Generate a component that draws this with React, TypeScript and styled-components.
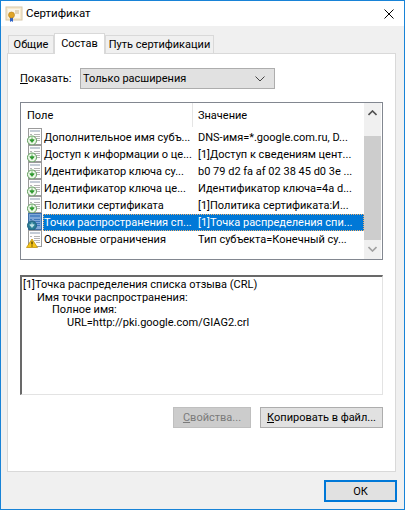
import styled, { createGlobalStyle } from 'styled-components';

const GlobalStyle = createGlobalStyle`
  html, body { margin: 0; padding: 0; background: #fff; }
  #root { width: 405px; height: 510px; }
`;

const Win = styled.div`
  box-sizing: border-box;
  width: 405px;
  height: 510px;
  border: 1px solid #1883d7;
  display: flex;
  flex-direction: column;
  font-family: Roboto, "Noto Sans", sans-serif;
  font-size: 11px;
  color: #000;
  overflow: hidden;
`;

const TitleBar = styled.div`
  height: 25px;
  flex: none;
  background: #fff;
  display: flex;
  align-items: center;
  padding: 0 10px 0 4px;
  gap: 3px;
`;

const Title = styled.div`
  flex: 1;
  font-size: 11.5px;
  line-height: 25px;
`;

const Body = styled.div`
  flex: 1;
  background: #f0f0f0;
  padding: 8px 8px 6px 6px;
  display: flex;
  flex-direction: column;
`;

const Tabs = styled.div`
  display: flex;
  align-items: flex-end;
  height: 20px;
  padding-left: 1px;
  position: relative;
  z-index: 1;
  margin-bottom: -1px;
`;

const Tab = styled.div<{ $active?: boolean; $w: number }>`
  box-sizing: border-box;
  width: ${(p) => p.$w}px;
  height: ${(p) => (p.$active ? 21 : 19)}px;
  background: ${(p) => (p.$active ? '#fff' : '#f0f0f0')};
  border: 1px solid #d9d9d9;
  border-bottom: ${(p) => (p.$active ? 'none' : '1px solid #d9d9d9')};
  text-align: center;
  line-height: ${(p) => (p.$active ? 19 : 18)}px;
  white-space: nowrap;
`;

const Panel = styled.div`
  box-sizing: border-box;
  width: 389px;
  height: 419px;
  background: #fff;
  border: 1px solid #d9d9d9;
  padding: 14px 12px 0 12px;
  display: flex;
  flex-direction: column;
`;

const ShowRow = styled.div`
  display: flex;
  align-items: center;
  height: 21px;
`;

const ShowLabel = styled.div`
  width: 60px;
  flex: none;
`;

const Combo = styled.div`
  box-sizing: border-box;
  width: 195px;
  height: 21px;
  background: #e1e1e1;
  border: 1px solid #adadad;
  padding: 0 9px 0 2px;
  display: flex;
  align-items: center;
  justify-content: space-between;
`;

const ListBox = styled.div`
  box-sizing: border-box;
  width: 363px;
  height: 158px;
  margin-top: 13px;
  border: 1px solid #828790;
  display: flex;
  background: #fff;
`;

const ListMain = styled.div`
  flex: 1;
  min-width: 0;
`;

const Header = styled.div`
  height: 24px;
  display: flex;
  align-items: center;
`;

const HeadCell = styled.div<{ $w?: number }>`
  box-sizing: border-box;
  height: 24px;
  line-height: 25px;
  padding-left: ${(p) => (p.$w ? 6 : 5)}px;
  width: ${(p) => (p.$w ? `${p.$w}px` : 'auto')};
  border-right: ${(p) => (p.$w ? '1px solid #e5e5e5' : 'none')};
`;

const Rows = styled.div`
  padding-top: 2px;
`;

const Row = styled.div`
  height: 17px;
  display: flex;
  align-items: center;
`;

const IconSlot = styled.div`
  width: 16px;
  height: 17px;
  margin-left: 6px;
  flex: none;
`;

const CellGroup = styled.div<{ $selected?: boolean }>`
  flex: 1;
  display: flex;
  height: 17px;
  line-height: 17px;
  background: ${(p) => (p.$selected ? '#0078d7' : 'transparent')};
  color: ${(p) => (p.$selected ? '#fff' : '#000')};
  outline: ${(p) => (p.$selected ? '1px dotted #f2b16e' : 'none')};
  outline-offset: -1px;
`;

const FieldCell = styled.div`
  box-sizing: border-box;
  width: 149px;
  padding-left: 1px;
  white-space: nowrap;
`;

const ValueCell = styled.div`
  flex: 1;
  padding-left: 6px;
  white-space: nowrap;
`;

const ScrollBar = styled.div`
  width: 17px;
  margin-right: 1px;
  flex: none;
  background: #f0f0f0;
  display: flex;
  flex-direction: column;
  align-items: center;
`;

const ScrollEnd = styled.div<{ $h: number }>`
  height: ${(p) => p.$h}px;
  flex: none;
  display: flex;
  align-items: center;
  justify-content: center;
`;

const Thumb = styled.div`
  width: 17px;
  height: 104px;
  margin-top: 13px;
  background: #cdcdcd;
`;

const Details = styled.div`
  box-sizing: border-box;
  width: 363px;
  height: 120px;
  margin-top: 15px;
  border: 1px solid #e3e3e3;
  border-top: 2px solid #696969;
  border-left: 2px solid #696969;
  padding: 2px 0 0 1px;
  background: #fff;
  line-height: 12.7px;
`;

const DetailLine = styled.div<{ $indent: number }>`
  padding-left: ${(p) => p.$indent}px;
  white-space: nowrap;
`;

const ButtonRow = styled.div`
  display: flex;
  justify-content: flex-end;
  gap: 9px;
  margin-top: 12px;
  width: 363px;
`;

const Button = styled.div<{ $w: number; $disabled?: boolean }>`
  box-sizing: border-box;
  width: ${(p) => p.$w}px;
  height: 21px;
  background: ${(p) => (p.$disabled ? '#cccccc' : '#e1e1e1')};
  border: 1px solid ${(p) => (p.$disabled ? '#bfbfbf' : '#adadad')};
  color: ${(p) => (p.$disabled ? '#7a7a7a' : '#000')};
  display: flex;
  align-items: center;
  justify-content: center;
  white-space: nowrap;
`;

const Footer = styled.div`
  display: flex;
  justify-content: flex-end;
  padding-top: 8px;
  width: 390px;
`;

const OkButton = styled.div`
  box-sizing: border-box;
  width: 73px;
  height: 22px;
  background: #e1e1e1;
  border: 2px solid #0078d7;
  display: flex;
  align-items: center;
  justify-content: center;
`;

const Mnemonic = styled.span`
  text-decoration: underline;
`;

const CertIcon = () => (
  <svg width="18" height="16" viewBox="0 0 18 16">
    <rect x="1" y="1" width="16" height="13" fill="#f6e9cf" stroke="#d8c8a8" />
    <rect x="3" y="3" width="12" height="9" fill="#fbf6ea" />
    <path d="M10 5h4M10 7h4" stroke="#c9b48e" />
    <path d="M5 11v5l1.5-1 1.5 1v-5z" fill="#2f63c8" />
    <circle cx="6.5" cy="9" r="3" fill="#e0a526" stroke="#b87d14" strokeWidth="0.6" />
  </svg>
);

const FieldIcon = ({ kind, selected }: { kind: 'ext' | 'warn'; selected?: boolean }) => (
  <svg width="18" height="18" viewBox="0 0 18 18" style={{ display: 'block', marginLeft: -1, marginTop: -1 }}>
    <rect x="2.5" y="0.5" width="13" height="16" fill={selected ? '#7fa8d8' : '#fdfdfd'} stroke={selected ? '#3f6fa8' : '#9a9a9a'} />
    <rect x="4" y="2" width="10" height="2" fill={selected ? '#4f86c6' : '#c4ccd6'} />
    <path d="M4 6.5h2M8 6.5h6M8 8.5h6M8 10.5h6M10 12.5h4" stroke={selected ? '#3f78bb' : '#b4b4b4'} />
    {kind === 'ext' ? (
      <>
        <circle cx="6" cy="12.5" r="4.5" fill={selected ? '#2a7d96' : '#eef7ea'} stroke={selected ? '#22607e' : '#5a9a55'} />
        <path d="M6 9.5v3.5M3.8 11.8l2.2 2.6 2.2-2.6z" fill={selected ? '#bfe3e8' : '#2f9a30'} stroke={selected ? '#bfe3e8' : '#2f9a30'} strokeWidth="0.9" />
      </>
    ) : (
      <>
        <path d="M6 9L11.5 17.5H0.5z" fill="#f5c518" stroke="#b98a00" strokeWidth="0.7" />
        <path d="M6 11.5v3M6 15.5v1" stroke="#3a2c00" strokeWidth="1.2" />
      </>
    )}
  </svg>
);

const rows: { field: string; value: string; kind: 'ext' | 'warn'; selected?: boolean }[] = [
  { field: 'Дополнительное имя субъ...', value: 'DNS-имя=*.google.com.ru, D...', kind: 'ext' },
  { field: 'Доступ к информации о це...', value: '[1]Доступ к сведениям цент...', kind: 'ext' },
  { field: 'Идентификатор ключа су...', value: 'b0 79 d2 fa af 02 38 45 d0 3e ...', kind: 'ext' },
  { field: 'Идентификатор ключа це...', value: 'Идентификатор ключа=4a d...', kind: 'ext' },
  { field: 'Политики сертификата', value: '[1]Политика сертификата:И...', kind: 'ext' },
  { field: 'Точки распространения сп...', value: '[1]Точка распределения спи...', kind: 'ext', selected: true },
  { field: 'Основные ограничения', value: 'Тип субъекта=Конечный су...', kind: 'warn' },
];

export default function App() {
  return (
    <Win>
      <GlobalStyle />
      <TitleBar>
        <CertIcon />
        <Title>Сертификат</Title>
        <svg width="10" height="10" viewBox="0 0 10 10">
          <path d="M0.5 0.5l9 9M9.5 0.5l-9 9" stroke="#000" strokeWidth="1" fill="none" />
        </svg>
      </TitleBar>
      <Body>
        <Tabs>
          <Tab $w={46}>Общие</Tab>
          <Tab $w={51} $active>Состав</Tab>
          <Tab $w={109}>Путь сертификации</Tab>
        </Tabs>
        <Panel>
          <ShowRow>
            <ShowLabel><Mnemonic>П</Mnemonic>оказать:</ShowLabel>
            <Combo>
              Только расширения
              <svg width="10" height="6" viewBox="0 0 10 6">
                <path d="M0.5 0.5L5 5l4.5-4.5" stroke="#444" fill="none" />
              </svg>
            </Combo>
          </ShowRow>
          <ListBox>
            <ListMain>
              <Header>
                <HeadCell $w={172}>Поле</HeadCell>
                <HeadCell>Значение</HeadCell>
              </Header>
              <Rows>
                {rows.map((r) => (
                  <Row key={r.field}>
                    <IconSlot><FieldIcon kind={r.kind} selected={r.selected} /></IconSlot>
                    <CellGroup $selected={r.selected}>
                      <FieldCell>{r.field}</FieldCell>
                      <ValueCell>{r.value}</ValueCell>
                    </CellGroup>
                  </Row>
                ))}
              </Rows>
            </ListMain>
            <ScrollBar>
              <ScrollEnd $h={20}>
                <svg width="9" height="6" viewBox="0 0 9 6"><path d="M0.5 5L4.5 1l4 4" stroke="#505050" strokeWidth="1.6" fill="none" /></svg>
              </ScrollEnd>
              <Thumb />
              <ScrollEnd $h={18}>
                <svg width="9" height="6" viewBox="0 0 9 6"><path d="M0.5 1l4 4 4-4" stroke="#a0a0a0" strokeWidth="1.6" fill="none" /></svg>
              </ScrollEnd>
            </ScrollBar>
          </ListBox>
          <Details>
            <DetailLine $indent={0}>[1]Точка распределения списка отзыва (CRL)</DetailLine>
            <DetailLine $indent={14}>Имя точки распространения:</DetailLine>
            <DetailLine $indent={29}>Полное имя:</DetailLine>
            <DetailLine $indent={44}>URL=http://pki.google.com/GIAG2.crl</DetailLine>
          </Details>
          <ButtonRow>
            <Button $w={78} $disabled><Mnemonic>С</Mnemonic>войства...</Button>
            <Button $w={123}><Mnemonic>К</Mnemonic>опировать в файл...</Button>
          </ButtonRow>
        </Panel>
        <Footer>
          <OkButton>ОК</OkButton>
        </Footer>
      </Body>
    </Win>
  );
}
